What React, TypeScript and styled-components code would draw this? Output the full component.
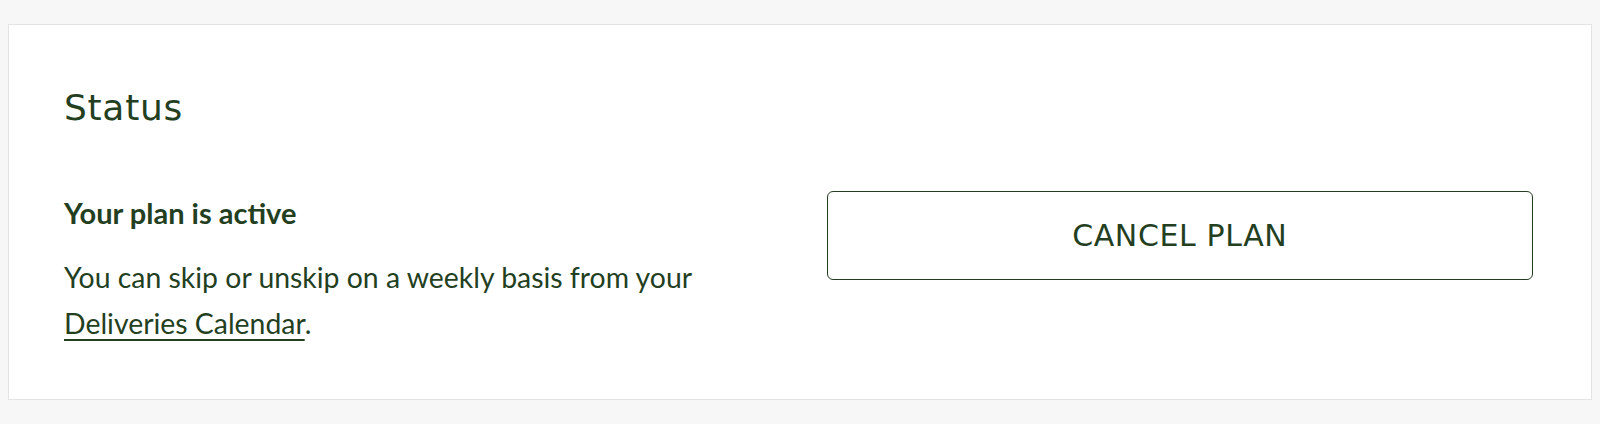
import styled, { createGlobalStyle } from "styled-components";

const GlobalStyle = createGlobalStyle`
  html, body {
    margin: 0;
    padding: 0;
    background: #f7f7f7;
  }
  * {
    box-sizing: border-box;
  }
`;

const green = "#233f1f";

const Page = styled.div`
  padding: 24px 8px 24px 8px;
`;

const Card = styled.section`
  background: #ffffff;
  border: 1px solid #e4e4e4;
  padding: 63px 58px 56px 55px;
  height: 376px;
`;

const Heading = styled.h2`
  margin: 0;
  font-family: "DejaVu Sans", sans-serif;
  font-weight: 400;
  font-size: 36px;
  line-height: 40px;
  letter-spacing: 0.7px;
  color: ${green};
`;

const Row = styled.div`
  display: grid;
  grid-template-columns: 1fr 1fr;
  column-gap: 56px;
  align-items: start;
  margin-top: 63px;
`;

const Info = styled.div`
  padding-top: 5px;
  font-family: Lato, sans-serif;
  color: ${green};
`;

const PlanTitle = styled.h3`
  margin: 0 0 24px;
  font-size: 29px;
  line-height: 34px;
  font-weight: 700;
`;

const Text = styled.p`
  margin: 0;
  font-size: 28.4px;
  line-height: 46px;
`;

const Link = styled.a`
  color: ${green};
  white-space: nowrap;
  text-decoration: underline;
  text-underline-offset: 5px;
  text-decoration-thickness: 1.5px;
`;

const CancelButton = styled.button`
  width: 100%;
  height: 89px;
  border: 1.5px solid ${green};
  border-radius: 6px;
  background: #ffffff;
  color: ${green};
  font-family: "DejaVu Sans", sans-serif;
  font-size: 30px;
  letter-spacing: 0.6px;
  text-transform: uppercase;
  cursor: pointer;
`;

export default function App() {
  return (
    <Page>
      <GlobalStyle />
      <Card>
        <Heading>Status</Heading>
        <Row>
          <Info>
            <PlanTitle>Your plan is active</PlanTitle>
            <Text>
              You can skip or unskip on a weekly basis from your{" "}
              <Link href="#">Deliveries Calendar</Link>.
            </Text>
          </Info>
          <CancelButton>Cancel plan</CancelButton>
        </Row>
      </Card>
    </Page>
  );
}
